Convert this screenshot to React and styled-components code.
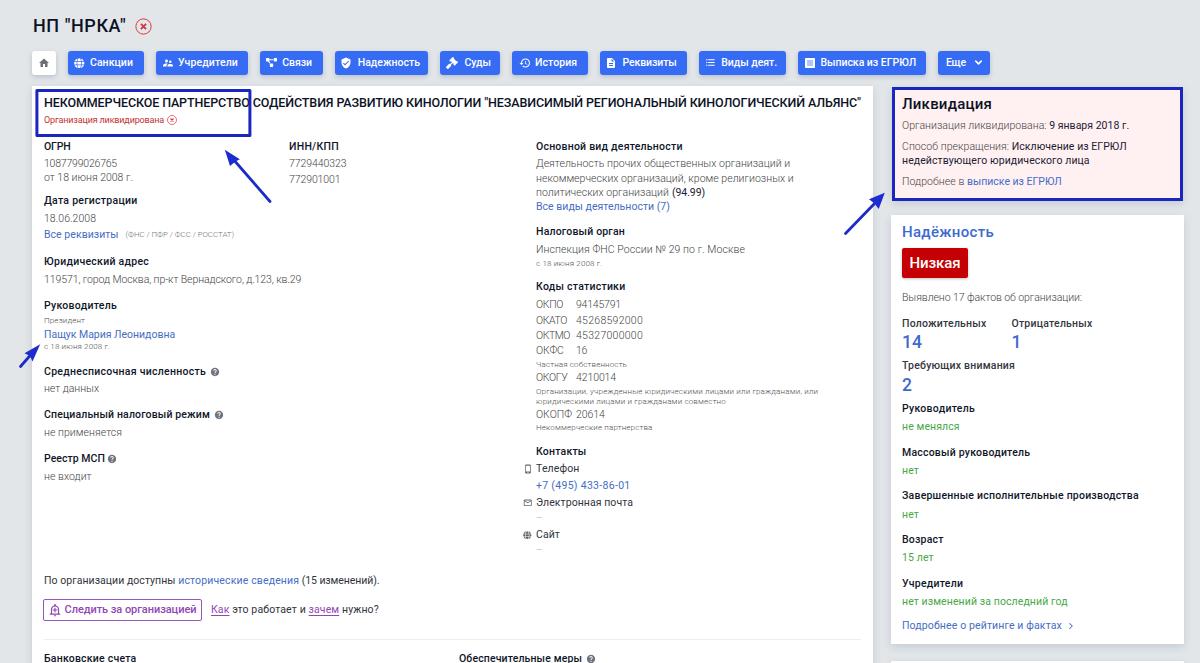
import React from "react";
import styled, { createGlobalStyle, css } from "styled-components";
import {
  MdHome, MdLanguage, MdSupervisorAccount, MdVerifiedUser, MdHistory,
  MdDescription, MdFormatListBulleted, MdOutlineAddAlert, MdMailOutline, MdPhoneAndroid, MdHelp,
} from "react-icons/md";
import { FaProjectDiagram, FaGavel, FaGlobe } from "react-icons/fa";
import { FiChevronDown, FiChevronRight } from "react-icons/fi";

const Global = createGlobalStyle`
  * { box-sizing: border-box; }
  html, body { margin: 0; overflow: hidden; }
  body {
    background: #e2e6e9;
    color: #0c1226;
    font-family: Roboto, "Liberation Sans", sans-serif;
    font-size: 10.5px;
    line-height: 12px;
  }
  svg { display: block; flex: none; }
`;

const Page = styled.div`
  height: 663px;
  overflow: hidden;
  padding: 14px 16px 0 32px;
  position: relative;
`;

const Header = styled.header`
  display: flex;
  align-items: center;
  height: 24px;
  gap: 9px;
`;

const Title = styled.h1`
  margin: 0 0 0 1px;
  font-size: 18px;
  line-height: 24px;
  font-weight: 500;
  letter-spacing: 0.56px;
  white-space: nowrap;
`;

const Nav = styled.nav`
  display: flex;
  gap: 12px;
  margin-top: 13px;
  height: 23px;
`;

const NavButton = styled.a`
  display: flex;
  align-items: center;
  width: ${(p) => p.$w}px;
  height: 23.5px;
  padding-left: ${(p) => p.$pad ?? 5.5}px;
  gap: ${(p) => p.$gap ?? 5.5}px;
  flex: none;
  border-radius: 3px;
  background: #366cf4;
  color: #fff;
  font-weight: 500;
  letter-spacing: ${(p) => p.$ls ?? 0}px;
  white-space: nowrap;
  box-shadow: 0 2px 5px rgba(40, 60, 110, 0.22);
`;

const HomeButton = styled(NavButton)`
  background: #fff;
  color: #6d7176;
  padding: 0;
  justify-content: center;
`;

const Columns = styled.main`
  display: flex;
  align-items: flex-start;
  gap: 18px;
  margin-top: 12px;
`;

const Card = styled.section`
  background: #fff;
  box-shadow: 0 3px 8px rgba(60, 75, 95, 0.17);
`;

const MainCard = styled(Card)`
  width: 841px;
  height: 620px;
  padding: 8px 12px 0;
`;

const Sidebar = styled.aside`
  width: 293px;
  display: flex;
  flex-direction: column;
`;

const line = css`
  display: flex;
  align-items: center;
  min-height: 12px;
  margin-top: ${(p) => p.$mt ?? 0}px;
  letter-spacing: ${(p) => p.$ls ?? 0}px;
  white-space: pre;
`;

const Label = styled.div`
  ${line}
  font-weight: 500;
  color: ${(p) => p.$tone ?? "#10162a"};
`;
const Value = styled.div`
  ${line}
  font-weight: 300;
  color: #444;
`;
const Small = styled.div`
  ${line}
  font-size: 8px;
  font-weight: 300;
  color: #505050;
  line-height: ${(p) => p.$lh ?? 12}px;
`;
const Text = styled.div`
  ${line}
  color: #30343c;
`;
const Good = styled.div`
  ${line}
  color: #46a846;
`;
const LinkLine = styled.div`
  ${line}
  color: #456dc2;
`;
const Dash = styled.div`
  ${line}
  color: #8d8d8d;
  font-size: 8px;
  font-weight: 300;
`;
const Span = styled.span`
  letter-spacing: ${(p) => p.$ls ?? 0}px;
  margin-left: ${(p) => p.$ml ?? 0}px;
`;
const Strong = styled(Span)`
  font-weight: 400;
  color: #1c2033;
`;
const A = styled(Span)`
  font-weight: 400;
  color: #456dc6;
`;
const Purple = styled(Span)`
  color: #9147b2;
  text-decoration: underline;
  text-underline-offset: 1.5px;
`;
const Sources = styled(Span)`
  font-size: 8px;
  font-weight: 300;
  color: #777;
`;

const FullName = styled.h2`
  margin: 0;
  font-size: 12.5px;
  line-height: 17px;
  font-weight: 500;
  letter-spacing: -0.11px;
  white-space: nowrap;
`;
const Status = styled.div`
  ${line}
  font-size: 9px;
  color: #c3332f;
  gap: 2.5px;
`;

const Details = styled.div`
  display: flex;
  height: 430px;
  padding-top: 15px;
`;
const LeftColumn = styled.div`
  width: 492px;
`;
const Pair = styled.div`
  display: flex;
`;
const Half = styled.div`
  width: ${(p) => p.$w}px;
`;
const CodeName = styled.span`
  width: 40px;
  letter-spacing: ${(p) => p.$ls ?? 0}px;
`;
const ContactRow = styled(Text)`
  margin-left: -14px;
`;
const ContactIcon = styled.span`
  width: 14px;
  display: flex;
  padding-left: ${(p) => p.$pl ?? 1}px;
  color: #666;
`;
const Help = styled(MdHelp)`
  color: #70757d;
  margin-left: ${(p) => p.$ml ?? 4}px;
`;

const FollowRow = styled.div`
  display: flex;
  align-items: center;
  margin-top: 12px;
  gap: 9px;
  height: 22px;
`;
const FollowButton = styled.button`
  display: flex;
  align-items: center;
  width: 159px;
  height: 22px;
  margin: 0 0 0 -1px;
  padding: 0 0 0 4px;
  gap: 2.5px;
  border: 1px solid #9a55b8;
  border-radius: 2px;
  background: #fff;
  color: #9147b2;
  font: 500 11px/12px Roboto, sans-serif;
  letter-spacing: -0.05px;
  white-space: nowrap;
`;
const Divider = styled.hr`
  margin: 18px 0 0;
  border: 0;
  height: 1px;
  background: #eceef0;
`;

const Liquidation = styled(Card)`
  margin: 1px 1px 0;
  height: 114px;
  padding: 6px 7px;
  border: 3px solid #1a27bf;
  background: #fff0f1;
`;
const PanelTitle = styled.h3`
  margin: 0;
  font-size: 15px;
  line-height: 16px;
  font-weight: 500;
  letter-spacing: ${(p) => p.$ls}px;
  color: ${(p) => p.$tone ?? "#0c1226"};
`;
const Reliability = styled(Card)`
  margin-top: 14px;
  height: 429px;
  padding: 9px 11px 0;
`;
const NextCard = styled(Card)`
  margin-top: 17px;
  height: 20px;
`;
const Badge = styled.div`
  width: 66px;
  height: 30px;
  margin-top: 8px;
  border-radius: 2px;
  background: #c40004;
  color: #fff;
  font-size: 15px;
  line-height: 30px;
  font-weight: 500;
  letter-spacing: -0.1px;
  text-align: center;
  box-shadow: 0 1px 3px rgba(0, 0, 0, 0.25);
`;
const Count = styled.div`
  margin-top: ${(p) => p.$mt}px;
  font-size: 17.5px;
  line-height: 16px;
  font-weight: 500;
  color: #3d6ad0;
`;

const Annotations = styled.svg`
  position: absolute;
  left: 0;
  top: 0;
  pointer-events: none;
`;

const CrossCircle = ({ size, stroke }) => (
  <svg width={size} height={size} viewBox="0 0 16 16" fill="none" stroke="#d8323a">
    <circle cx="8" cy="8" r="7.2" strokeWidth={stroke} />
    <path d="M5.6 5.6l4.8 4.8M10.4 5.6l-4.8 4.8" strokeWidth="1.7" />
  </svg>
);

const ExtractIcon = () => (
  <svg width="10" height="10" viewBox="0 0 10 10">
    <rect width="10" height="10" rx="0.8" fill="#fff" />
    <path d="M2 3h6M2 5h6M2 7h6" stroke="#366cf4" strokeWidth="0.8" />
  </svg>
);

const codes = [
  ["ОКПО", "94145791", 6, -0.34],
  ["ОКАТО", "45268592000", 4, -0.4],
  ["ОКТМО", "45327000000", 3, -0.46],
  ["ОКФС", "16", 3, -0.2],
];

const facts = [
  ["Руководитель", "не менялся", 10, 6, 0.27],
  ["Массовый руководитель", "нет", 14, 6, 0.22],
  ["Завершенные исполнительные производства", "нет", 13, 7, 0.22],
  ["Возраст", "15 лет", 13, 6, 0.2],
  ["Учредители", "нет изменений за последний год", 14, 6, 0.24],
];

export default function App() {
  return (
    <Page>
      <Global />
      <Header>
        <Title>НП "НРКА"</Title>
        <CrossCircle size={17} stroke={0.9} />
      </Header>
      <Nav>
        <HomeButton $w={24}><MdHome size={12} /></HomeButton>
        <NavButton $w={75.5} $ls={0.05} $pad={6} $gap={5.5}><FaGlobe size={10.5} />Санкции</NavButton>
        <NavButton $w={92.2} $ls={0.12} $pad={6.5} $gap={4}><MdSupervisorAccount size={12} />Учредители</NavButton>
        <NavButton $w={63} $ls={-0.05} $pad={6}><FaProjectDiagram size={11} />Связи</NavButton>
        <NavButton $w={93.8} $ls={0}><MdVerifiedUser size={12} />Надежность</NavButton>
        <NavButton $w={60} $ls={-0.1} $pad={6} $gap={6}><FaGavel size={12} />Суды</NavButton>
        <NavButton $w={75.5} $ls={0.1} $pad={6.5} $gap={4}><MdHistory size={12} />История</NavButton>
        <NavButton $w={86.8} $ls={-0.1} $pad={5.5} $gap={5}><MdDescription size={12} />Реквизиты</NavButton>
        <NavButton $w={87.2} $ls={-0.05} $pad={6}><MdFormatListBulleted size={11} />Виды деят.</NavButton>
        <NavButton $w={128} $ls={-0.03} $pad={7}><ExtractIcon />Выписка из ЕГРЮЛ</NavButton>
        <NavButton $w={52} $ls={-0.3} $pad={8} $gap={7}>Еще<FiChevronDown size={11} strokeWidth={3.4} /></NavButton>
      </Nav>

      <Columns>
        <MainCard>
          <FullName>НЕКОММЕРЧЕСКОЕ ПАРТНЕРСТВО СОДЕЙСТВИЯ РАЗВИТИЮ КИНОЛОГИИ "НЕЗАВИСИМЫЙ РЕГИОНАЛЬНЫЙ КИНОЛОГИЧЕСКИЙ АЛЬЯНС"</FullName>
          <Status $mt={3} $ls={-0.16}>Организация ликвидирована<CrossCircle size={10} stroke={1.1} /></Status>

          <Details>
            <LeftColumn>
              <Pair>
                <Half $w={245}>
                  <Label $ls={-0.18}>ОГРН</Label>
                  <Value $mt={5} $ls={-0.21}>1087799026765</Value>
                  <Value $mt={2}>от 18 июня 2008 г.</Value>
                </Half>
                <Half $w={200}>
                  <Label $ls={0.27}>ИНН/КПП</Label>
                  <Value $mt={5} $ls={-0.07}>7729440323</Value>
                  <Value $mt={4} $ls={-0.1}>772901001</Value>
                </Half>
              </Pair>
              <Label $mt={9} $ls={0.26}>Дата регистрации</Label>
              <Value $mt={6} $ls={0.04}>18.06.2008</Value>
              <LinkLine $mt={4} $ls={0.04}>Все реквизиты<Sources $ml={7} $ls={-0.07}>(ФНС / ПФР / ФСС / РОССТАТ)</Sources></LinkLine>
              <Label $mt={15} $ls={0.27}>Юридический адрес</Label>
              <Value $mt={6} $ls={-0.09}>119571, город Москва, пр-кт Вернадского, д.123, кв.29</Value>
              <Label $mt={14} $ls={0.27}>Руководитель</Label>
              <Small $mt={3} $ls={0.13}>Президент</Small>
              <LinkLine $mt={2} $ls={-0.02}>Пащук Мария Леонидовна</LinkLine>
              <Small $mt={0} $ls={0.14}>с 18 июня 2008 г.</Small>
              <Label $mt={13} $ls={0.28}>Среднесписочная численность<Help size={10} /></Label>
              <Value $mt={5} $ls={-0.03}>нет данных</Value>
              <Label $mt={14} $ls={0.14}>Специальный налоговый режим<Help size={10} /></Label>
              <Value $mt={6} $ls={0.05}>не применяется</Value>
              <Label $mt={14} $ls={0.04}>Реестр МСП<Help size={10} $ml={2} /></Label>
              <Value $mt={6} $ls={0.05}>не входит</Value>
            </LeftColumn>

            <div>
              <Label $ls={0.22}>Основной вид деятельности</Label>
              <Value $mt={5} $ls={0.03}>Деятельность прочих общественных организаций и</Value>
              <Value $mt={3} $ls={0.03}>некоммерческих организаций, кроме религиозных и</Value>
              <Value $mt={2} $ls={0.03}>политических организаций <Strong $ls={-0.09} $ml={0.5}>(94.99)</Strong></Value>
              <LinkLine $mt={2} $ls={0.02}>Все виды деятельности (7)</LinkLine>
              <Label $mt={13} $ls={0.18}>Налоговый орган</Label>
              <Value $mt={6} $ls={0.07}>Инспекция ФНС России № 29 по г. Москве</Value>
              <Small $mt={2} $ls={0.16}>с 18 июня 2008 г.</Small>
              <Label $mt={11} $ls={0.25}>Коды статистики</Label>
              {codes.map(([name, code, mt, ls]) => (
                <Value key={name} $mt={mt} $ls={code.length > 9 ? 0.27 : -0.2}>
                  <CodeName $ls={ls}>{name}</CodeName>{code}
                </Value>
              ))}
              <Small $mt={2} $ls={0.15}>Частная собственность</Small>
              <Value $mt={1} $ls={-0.1}><CodeName $ls={-0.3}>ОКОГУ</CodeName>4210014</Value>
              <Small $mt={3} $ls={0.17} $lh={10}>{"Организации, учрежденные юридическими лицами или гражданами, или\nюридическими лицами и гражданами совместно"}</Small>
              <Value $mt={2} $ls={-0.1}><CodeName>ОКОПФ</CodeName>20614</Value>
              <Small $mt={1} $ls={0.16}>Некоммерческие партнерства</Small>
              <Label $mt={12} $ls={0.21}>Контакты</Label>
              <ContactRow $mt={5} $ls={0.12}><ContactIcon $pl={0.5}><MdPhoneAndroid size={10} /></ContactIcon>Телефон</ContactRow>
              <LinkLine $mt={5} $ls={0.3}>+7 (495) 433-86-01</LinkLine>
              <ContactRow $mt={5} $ls={0.07}><ContactIcon><MdMailOutline size={9.5} /></ContactIcon>Электронная почта</ContactRow>
              <Dash $mt={3}>—</Dash>
              <ContactRow $mt={5} $ls={0.05}><ContactIcon><FaGlobe size={8.5} /></ContactIcon>Сайт</ContactRow>
              <Dash $mt={3}>—</Dash>
            </div>
          </Details>

          <Text $mt={19} $ls={0.05}>По организации доступны <A $ls={0.15}>исторические сведения</A><Span $ls={-0.08} $ml={2.5}>(15 изменений).</Span></Text>
          <FollowRow>
            <FollowButton><MdOutlineAddAlert size={14} />Следить за организацией</FollowButton>
            <Text $ls={0.13}><Purple $ls={0.1}>Как</Purple> это работает и <Purple $ls={0.1}>зачем</Purple> нужно?</Text>
          </FollowRow>
          <Divider />
          <Pair>
            <Half $w={415}><Label $mt={13} $ls={0.22}>Банковские счета</Label></Half>
            <Half $w={200}><Label $mt={13} $ls={0.13}>Обеспечительные меры<Help size={10} /></Label></Half>
          </Pair>
        </MainCard>

        <Sidebar>
          <Liquidation>
            <PanelTitle $ls={0.22}>Ликвидация</PanelTitle>
            <Value $mt={8} $ls={0.03}>Организация ликвидирована: <Strong $ls={0.02}>9 января 2018 г.</Strong></Value>
            <Value $mt={9} $ls={0.06}>Способ прекращения: <Strong $ls={0.05}>Исключение из ЕГРЮЛ</Strong></Value>
            <Value $mt={2}><Strong $ls={0.08}>недействующего юридического лица</Strong></Value>
            <Value $mt={9} $ls={0.08}>Подробнее в <A $ls={-0.01}>выписке из ЕГРЮЛ</A></Value>
          </Liquidation>

          <Reliability>
            <PanelTitle $ls={0.31} $tone="#3d6ad0">Надёжность</PanelTitle>
            <Badge>Низкая</Badge>
            <Value $mt={14} $ls={-0.07}>Выявлено 17 фактов об организации:</Value>
            <Pair>
              <Half $w={109.5}>
                <Label $mt={14} $ls={0.21} $tone="#33373f">Положительных</Label>
                <Count $mt={4}>14</Count>
              </Half>
              <Half $w={120}>
                <Label $mt={14} $ls={0.21} $tone="#33373f">Отрицательных</Label>
                <Count $mt={4}>1</Count>
              </Half>
            </Pair>
            <Label $mt={10} $ls={0.21} $tone="#33373f">Требующих внимания</Label>
            <Count $mt={5}>2</Count>
            {facts.map(([name, value, top, gap, ls]) => (
              <React.Fragment key={name}>
                <Label $mt={top} $ls={ls}>{name}</Label>
                <Good $mt={gap} $ls={0.1}>{value}</Good>
              </React.Fragment>
            ))}
            <LinkLine $mt={12} $ls={0.13}>Подробнее о рейтинге и фактах<Span $ml={4}><FiChevronRight size={10} strokeWidth={2.5} /></Span></LinkLine>
          </Reliability>
          <NextCard />
        </Sidebar>
      </Columns>

      <Annotations width="1200" height="663" viewBox="0 0 1200 663">
        <rect x="36.9" y="90.4" width="213" height="45" fill="none" stroke="#1a27bf" strokeWidth="3" strokeLinejoin="round" />
        <g stroke="#1c2cc8" strokeWidth="2.8" strokeLinecap="round">
          <path d="M233 159L270 201.500" />
          <path d="M876 202L845.500 233.500" />
          <path d="M31 354.500L20.500 366.500" />
        </g>
        <g fill="#1c2cd0">
          <path d="M224.800 149.800L239.800 159.300L235.500 161.500L230 166Z" />
          <path d="M884.800 192.800L869 199.300L874.500 203.500L878.700 209Z" />
          <path d="M40.200 344.200L24.500 353.300L30 356L32.500 361.500Z" />
        </g>
      </Annotations>
    </Page>
  );
}
